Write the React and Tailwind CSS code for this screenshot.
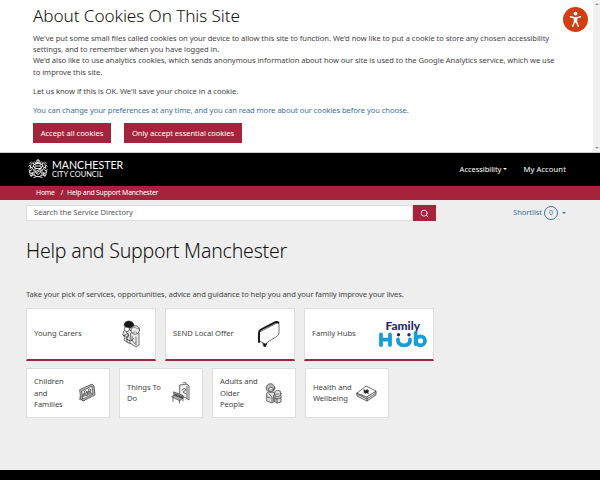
import { LuSearch } from "react-icons/lu"

const isoLine = { fill: "#fff", stroke: "#333", strokeWidth: 0.7, strokeLinejoin: "round", strokeLinecap: "round" }

function CrestLogo() {
    return (
        <svg className="w-[22px] h-[19px] -mt-[3px]" viewBox="0 0 42 38" fill="none" stroke="#e8e8e8" strokeWidth="2">
            {/* shield */}
            <path d="M15 14h12v9q0 5-6 8q-6-3-6-8zM15 19h12M16 25l10-5M17 28l9-5" />
            {/* crest */}
            <circle cx="21" cy="5" r="3.2" />
            <path d="M14 12q1-4 7-4t7 4M14 5l3 4M28 5l-3 4M12 11q9-4 18 0M21 1v8" />
            {/* supporters */}
            <path d="M13 32V22q-4-1-4-6l-4 3 2-8 4-4 2 4-2 3 4 4M9 21l-6 4 3 5 5-3-3 8M5 12l-3 3M2 21l4 3M4 31l5 3M8 6l-4 3M10 15l-3 3M6 27l4 3" />
            <path d="M29 32V22q4-1 4-6l4 3-2-8-4-4-2 4 2 3-4 4M33 21l6 4-3 5-5-3 3 8M37 12l3 3M40 21l-4 3M38 31l-5 3M34 6l4 3M32 15l3 3M36 27l-4 3" />
            {/* motto */}
            <path d="M5 34q6-4 10-1t6 2q3 1 6-2t10 1M12 37q9-5 18 0" />
        </svg>
    )
}

function CarersIcon() {
    return (
        <svg className="w-[18px] h-[28px]" viewBox="0 0 18 28" {...isoLine}>
            <path d="M2 11l4-2 5 3v10l-3 2-6-4 1-3-2-2zM2 15l3 2v5M6 13v4" fill="#eee" />
            <path d="M9 13l5-2 3 2v12l-3 2-6-4z" fill="#eee" />
            <path d="M4 12l3 3-3 4 5 2 3-3M14 17v8M10 20l3 4M10 16v4M1 16l4-2" fill="none" />
            <circle cx="5" cy="9" r="2.6" />
            <path d="M2 5.500q0-4 4-4.500 6 0 6 5l-4 2-4-1z" fill="#151515" />
            <circle cx="13.300" cy="10" r="4.300" fill="#eee" />
            <path d="M10 8q2-2 4 0t4 0M11 13l2-1M14 12l1 1" strokeWidth=".5" fill="none" />
        </svg>
    )
}

function SpeechIcon() {
    return (
        <svg className="w-[24px] h-[28px]" viewBox="0 0 24 28" {...isoLine}>
            <path d="M2.500 12L20 3q2-.5 2 2v8q0 2-3 4L10.500 22 8 26l-2-3-3.500-2z" strokeWidth=".7" />
            <path d="M2 22V13q0-2.500 2-3.500L18.500 2.200q1.500-.5 3 .3" fill="none" stroke="#111" strokeWidth="1.900" />
            <path d="M6.500 23l2 1 1.500-1-1.500 4-2-1z" fill="#111" />
        </svg>
    )
}

function FamilyHubLogo() {
    return (
        <svg className="w-[50px] h-[33px] -mt-[4px]" viewBox="0 -4 50 33">
            <text x="6.500" y="9.500" fontFamily="Lato, 'Open Sans', sans-serif" fontWeight="900" fontSize="12" fill="#25286c" textLength="34.500" lengthAdjust="spacingAndGlyphs">Family</text>
            {/* rounded strokes of the hub mark */}
            <g fill="none" stroke="#149fd6" strokeWidth="3.800" strokeLinecap="round">
                <path d="M2 14.500v10.500M11 14.500v10.500M2 19.700h9" />
                <path d="M19 19.500v.8q0 5 6 5t6-5v-.8" />
                <path d="M36.700 13v11" />
                <circle cx="41.500" cy="20.800" r="4.500" />
            </g>
            <circle cx="19.500" cy="14.800" r="1.700" fill="#25286c" />
            <circle cx="30" cy="14.800" r="1.700" fill="#25286c" />
        </svg>
    )
}

function PhotoFrameIcon() {
    return (
        <svg className="w-[18px] h-[20px]" viewBox="0 0 18 20" {...isoLine}>
            <path d="M1.500 14l3.500 4 3-2M1 16l2 1" />
            <path d="M2 6.500l12-5.500 2 2 1 9-12 6-2-2z" fill="#bbb" />
            <path d="M4 8l10-5 1 8-10 5z" />
            <path d="M5 14l0-3 2-1 2 3v-4l3-1 2 3" fill="#888" strokeWidth=".5" />
            <circle cx="7.500" cy="9" r="1.200" /><circle cx="11.500" cy="7" r="1.200" />
        </svg>
    )
}

function ParkIcon() {
    return (
        <svg className="w-[19px] h-[22px]" viewBox="0 0 19 22" {...isoLine}>
            <path d="M9 3l7-1 2 2v14l-3-2-6-3z" fill="#eee" />
            <path d="M12 1l2-1 1 2M11 8q3-3 4 0l-3 2 3 2M16 4v12" fill="none" />
            <path d="M3 10l9 3.500v3L3 13zM1 14.500l3-1.500 8 3-3 2.500z" fill="#aaa" />
            <path d="M2 15.500v4M8.500 18v3M12 16v3M4 12l8 3" />
        </svg>
    )
}

function PeopleIcon() {
    return (
        <svg className="w-[17px] h-[21px]" viewBox="0 0 17 21" {...isoLine}>
            <path d="M2 10l3-2 5 2v8l-3 2-5-2zM9 12l4-2 3 2v7l-4 1-3-2z" fill="#ddd" />
            <circle cx="5.500" cy="5" r="4.300" fill="#bbb" />
            <circle cx="6" cy="6.500" r="2.300" />
            <circle cx="12.800" cy="10.500" r="3.200" fill="#e5e5e5" />
            <path d="M4 11l3 3v5M2 14l3 1M12 15v5M9 15l3 1 4-1M11 11h3M5 7h2" fill="none" />
        </svg>
    )
}

function FirstAidIcon() {
    return (
        <svg className="w-[21px] h-[17px]" viewBox="0 0 21 17" {...isoLine}>
            <path d="M1 8v3l10 5 9-6V6l-9 6z" fill="#ddd" />
            <path d="M1 8l9-7 10 5-9 6zM1 9l10 5 9-6M11 12v4" />
            <path d="M8 4.500l1.500 1 2-1 1.500 1.500-1 1 .5 1.500-2-.5-1.500.5-1-1z" fill="#222" strokeWidth=".4" />
        </svg>
    )
}

function AccessibilityBadge() {
    return (
        <svg className="absolute left-[563px] top-[7px] w-[25px] h-[25px]" viewBox="0 0 25 25">
            <circle cx="12.500" cy="12.500" r="12.500" fill="#d03e12" />
            <circle cx="12.500" cy="6.600" r="1.900" fill="#fff" />
            <path d="M7.500 9.800l3.500 1h3l3.500-1M12.500 11v4M11.500 11v4l-1.800 4.300M13.500 11v4l1.800 4.300" fill="none" stroke="#fff" strokeWidth="1.500" strokeLinecap="round" strokeLinejoin="round" />
        </svg>
    )
}

function Caret({ className = "" }) {
    return <span className={`inline-block border-x-2 border-x-transparent border-t-2 ${className}`} />
}

const mainTiles = [
    { label: "Young Carers", icon: <CarersIcon />, pad: "pr-[15px]" },
    { label: "SEND Local Offer", icon: <SpeechIcon />, pad: "pr-[13px]" },
    { label: "Family Hubs", icon: <FamilyHubLogo />, pad: "pr-[4px]" },
]

const subTiles = [
    { lines: ["Children", "and", "Families"], icon: <PhotoFrameIcon />, pad: "pr-[13px]" },
    { lines: ["Things To", "Do"], icon: <ParkIcon />, pad: "pr-[12px]" },
    { lines: ["Adults and", "Older", "People"], icon: <PeopleIcon />, pad: "pr-[13px]" },
    { lines: ["Health and", "Wellbeing"], icon: <FirstAidIcon />, pad: "pr-[11px]" },
]

function CookieBanner() {
    return (
        <div className="flex h-[153px] bg-white border-b border-[#ccc]">
            <div className="flex-1 pl-[33px] pt-[4px] whitespace-nowrap">
                <h2 className="text-[17.200px] leading-[24px] text-[#111] font-light tracking-[-0.100px]">About Cookies On This Site</h2>
                <div className="mt-[5px] tracking-[-0.045px]">
                    <p>We've put some small files called cookies on your device to allow this site to function. We'd now like to put a cookie to store any chosen accessibility</p>
                    <p>settings, and to remember when you have logged in.</p>
                    <p>We'd also like to use analytics cookies, which sends anonymous information about how our site is used to the Google Analytics service, which we use</p>
                    <p>to improve this site.</p>
                </div>
                <p className="mt-[8px] tracking-[-0.045px]">Let us know if this is OK. We'll save your choice in a cookie.</p>
                <p className="mt-[8px] tracking-[-0.070px] text-[#41719a]">You can change your preferences at any time, and you can read more about our cookies before you choose.</p>
                <div className="mt-[7px] flex gap-[13px] text-white">
                    <button className="w-[78px] h-[20px] bg-[#a5233c]">Accept all cookies</button>
                    <button className="w-[118px] h-[20px] bg-[#a5233c] tracking-[-0.060px]">Only accept essential cookies</button>
                </div>
            </div>

            {/* scrollbar */}
            <div className="w-[7px] bg-[#f1f1f1] flex flex-col items-center justify-between py-[3px]">
                <span className="border-x-2 border-x-transparent border-b-2 border-b-[#999]" />
                <span className="border-x-2 border-x-transparent border-t-2 border-t-[#999]" />
            </div>
        </div>
    )
}

export default function App() {
    return (
        <div className="relative w-[600px] h-[480px] overflow-hidden flex flex-col bg-[#eee] text-[#444] text-[7.600px] leading-[11.200px] font-['Noto_Sans','Open_Sans',sans-serif]">
            <CookieBanner />
            <AccessibilityBadge />

            {/* header */}
            <header className="h-[33px] bg-black text-white flex items-center pl-[27px] pr-[34px]">
                <CrestLogo />
                <div className="ml-[3px] -mt-[1px] whitespace-nowrap font-['Lato',sans-serif]">
                    <div className="text-[10.600px] leading-[10px] tracking-[0px]">MANCHESTER</div>
                    <div className="text-[7.400px] leading-[9px] tracking-[0.050px]">CITY COUNCIL</div>
                </div>
                <nav className="ml-auto flex gap-[16px] whitespace-nowrap">
                    <span className="flex items-center tracking-[-0.080px]">Accessibility<Caret className="ml-[2px] border-t-white" /></span>
                    <span className="tracking-[0.100px]">My Account</span>
                </nav>
            </header>

            <div className="h-[14px] bg-[#a5233c] text-white flex items-center pl-[36px] gap-[6px] whitespace-nowrap text-[6.900px] tracking-[-0.220px]">
                <span>Home</span>
                <span>/</span>
                <span className="-ml-[2px]">Help and Support Manchester</span>
            </div>

            {/* search + shortlist */}
            <div className="mt-[5px] flex h-[16px] items-center pl-[26px] pr-[34px]">
                <div className="w-[387px] h-[16px] bg-white border border-[#ddd] pl-[7px] flex items-center text-[#555] tracking-[-0.030px]">Search the Service Directory</div>
                <button className="w-[23px] h-[16px] bg-[#a5233c] text-white flex items-center justify-center">
                    <LuSearch className="w-[9px] h-[9px]" />
                </button>
                <div className="ml-auto flex items-center text-[#41719a]">
                    <span className="tracking-[-0.080px]">Shortlist</span>
                    <span className="ml-[2px] w-[14px] h-[14px] rounded-full border-[1.500px] border-[#41719a] flex items-center justify-center text-[7px]">0</span>
                    <Caret className="ml-[4px] border-t-[#41719a]" />
                </div>
            </div>

            <main className="pl-[26px] pt-[16px] whitespace-nowrap">
                <h1 className="text-[19.500px] leading-[28px] text-[#111] font-light tracking-[-0.200px]">Help and Support Manchester</h1>
                <p className="mt-[24px] tracking-[-0.100px]">Take your pick of services, opportunities, advice and guidance to help you and your family improve your lives.</p>

                <div className="mt-[8px] flex gap-[9px]">
                    {mainTiles.map((tile) => (
                        <div key={tile.label} className={`w-[130px] h-[53px] bg-white border border-[#ddd] border-b-2 border-b-[#98283f] pl-[7px] flex items-center justify-between ${tile.pad}`}>
                            <span className="-mt-[2px]">{tile.label}</span>
                            {tile.icon}
                        </div>
                    ))}
                </div>

                <div className="mt-[7px] flex gap-[9px]">
                    {subTiles.map((tile) => (
                        <div key={tile.lines[0]} className={`w-[84px] h-[50px] bg-white border border-[#ddd] pl-[7px] flex items-center justify-between ${tile.pad}`}>
                            <span className="tracking-[-0.050px]">
                                {tile.lines.map((line) => <span key={line} className="block">{line}</span>)}
                            </span>
                            {tile.icon}
                        </div>
                    ))}
                </div>
            </main>

            <footer className="mt-auto h-[10px] bg-black" />
        </div>
    )
}
